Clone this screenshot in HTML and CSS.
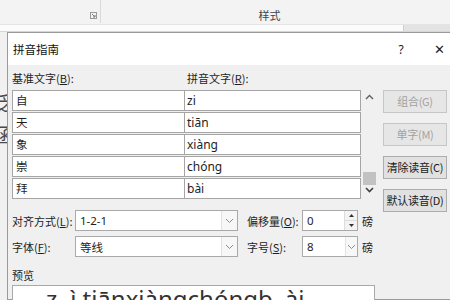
FILE: index.html
```html
<!DOCTYPE html>
<html>
<head>
<meta charset="utf-8">
<link rel="stylesheet" href="styles.css">
</head>
<body>
<div class="ribbon">
  <div class="ribbon-top">
    <div class="group-left">
      <svg class="launcher" width="7" height="7" viewBox="0 0 7 7"><rect x="0.5" y="0.5" width="6" height="6" fill="none" stroke="#9a9a9a"/><path d="M2 2 L5 5 M5 3 V5 H3" stroke="#7a7a7a" fill="none"/></svg>
    </div>
    <div class="group-right"><span class="ribbon-label">样式</span></div>
  </div>
  <div class="gallery"><div class="gallery-strip"></div><div class="gallery-side"></div></div>
</div>
<div class="workspace">
  <div class="doc-edge"><span class="g1">泛</span><span class="g2">涵</span></div>
  <div class="dialog">
    <div class="titlebar">
      <span class="title">拼音指南</span>
      <span class="cap help">?</span>
      <span class="cap close">✕</span>
    </div>
    <div class="body">
      <div class="top">
        <div class="main">
          <div class="heads">
            <span class="head1">基准文字(<u>B</u>):</span>
            <span class="head2">拼音文字(<u>R</u>):</span>
          </div>
          <div class="table-wrap">
            <div class="cells">
              <div class="cell">自</div><div class="cell py">zi</div>
              <div class="cell">天</div><div class="cell py">tiān</div>
              <div class="cell">象</div><div class="cell py">xiàng</div>
              <div class="cell">崇</div><div class="cell py">chóng</div>
              <div class="cell">拜</div><div class="cell py">bài</div>
            </div>
            <div class="scrollbar">
              <svg class="arrow" width="9" height="6" viewBox="0 0 9 6"><path d="M1 5 L4.5 1.5 L8 5" stroke="#606060" stroke-width="1.4" fill="none"/></svg>
              <div class="track"><div class="thumb"></div></div>
              <svg class="arrow" width="9" height="6" viewBox="0 0 9 6"><path d="M1 1 L4.5 4.5 L8 1" stroke="#404040" stroke-width="1.6" fill="none"/></svg>
            </div>
          </div>
        </div>
        <div class="buttons">
          <div class="btn disabled">组合(G)</div>
          <div class="btn disabled">单字(M)</div>
          <div class="btn">清除读音(C)</div>
          <div class="btn">默认读音(D)</div>
        </div>
      </div>
      <div class="opts">
        <span class="lbl">对齐方式(<u>L</u>):</span>
        <div class="combo wide"><span class="val">1-2-1</span><span class="drop"><svg width="9" height="6" viewBox="0 0 9 6"><path d="M1 1 L4.5 4.5 L8 1" stroke="#8a8a8a" fill="none"/></svg></span></div>
        <span class="lbl2">偏移量(<u>O</u>):</span>
        <div class="combo narrow"><span class="val">0</span><span class="spin"><span class="sb"><svg width="5" height="3" viewBox="0 0 5 3"><path d="M0 3 L2.5 0 L5 3Z" fill="#333"/></svg></span><span class="sb"><svg width="5" height="3" viewBox="0 0 5 3"><path d="M0 0 L2.5 3 L5 0Z" fill="#333"/></svg></span></span></div>
        <span class="unit">磅</span>

        <span class="lbl">字体(<u>F</u>):</span>
        <div class="combo wide"><span class="val">等线</span><span class="drop"><svg width="9" height="6" viewBox="0 0 9 6"><path d="M1 1 L4.5 4.5 L8 1" stroke="#8a8a8a" fill="none"/></svg></span></div>
        <span class="lbl2">字号(<u>S</u>):</span>
        <div class="combo narrow"><span class="val">8</span><span class="drop small"><svg width="9" height="6" viewBox="0 0 9 6"><path d="M1 1 L4.5 4.5 L8 1" stroke="#8a8a8a" fill="none"/></svg></span></div>
        <span class="unit">磅</span>
      </div>
      <div class="preview-label">预览</div>
      <div class="preview"><span class="pv">z</span><span class="pv">ì</span><span class="pv">tiānxiàngchóngb</span><span class="pv">ài</span></div>
    </div>
  </div>
</div>
</body>
</html>
```

FILE: styles.css
```css
* { box-sizing: border-box; }
html, body { margin: 0; padding: 0; }
body {
  width: 450px;
  height: 300px;
  overflow: hidden;
  background: #efefef;
  font-family: "Noto Sans CJK SC", "Noto Sans", sans-serif;
  font-size: 11px;
  color: #1e1e1e;
}
u { text-decoration: underline; text-underline-offset: 1px; }

.ribbon { height: 32px; background: #f3f3f3; border-bottom: 1px solid #d6d6d6; display: flex; flex-direction: column; }
.ribbon-top { height: 24px; display: flex; }
.group-left { width: 101px; flex: none; border-right: 1px solid #dadada; height: 23px; display: flex; align-items: flex-end; justify-content: flex-end; padding: 0 3px 4px 0; }
.group-right { flex: 1; display: flex; justify-content: center; padding: 8px 0 0 0; }
.ribbon-label { margin-right: 12px; color: #444; font-size: 11px; line-height: 14px; }
.gallery { flex: 1; display: flex; border-top: 1px solid #e4e4e4; }
.gallery-strip { width: 404px; flex: none; background: #fbfbfb; border-right: 1px solid #cfcfcf; }
.gallery-side { flex: 1; background: #e3e3e3; }

.workspace { display: flex; height: 268px; }
.doc-edge { width: 7px; flex: none; overflow: hidden; background: #f1f1f1; display: flex; flex-direction: column; }
.doc-edge span { font-size: 20px; line-height: 20px; color: #4a4a4a; margin-left: -8px; white-space: nowrap; }
.doc-edge .g1 { margin-top: 61px; }
.doc-edge .g2 { margin-top: 12px; }

.dialog { width: 446px; flex: none; border: 1px solid #9a9a9a; border-right: none; background: #f0f0f0; }
.titlebar { height: 32px; background: #fff; display: flex; align-items: center; padding-left: 5px; }
.title { font-size: 11.5px; color: #111; flex: 1; }
.cap { width: 20px; text-align: center; color: #222; font-family: "Noto Sans", sans-serif; }
.help { font-size: 12px; margin-right: 18px; }
.close { font-size: 13px; margin-right: 4px; }

.body { padding: 4px 0 0 4px; white-space: nowrap; }
.top { display: flex; gap: 5px; height: 141px; }
.main { width: 366px; flex: none; }
.heads { height: 21px; display: flex; line-height: 16px; padding-top: 1px; }
.head1 { width: 175px; flex: none; }
.table-wrap { display: flex; }
.cells { display: grid; grid-template-columns: 173px 176px; row-gap: 1px; width: 349px; }
.cell { height: 21px; background: #fff; border: 1px solid #a5a5a5; padding-left: 3px; line-height: 19px; font-size: 11.5px; }
.cell + .cell.py { border-left: none; }
.py { font-family: "Noto Sans", sans-serif; padding-left: 2px; font-size: 12px; }
.scrollbar { width: 17px; height: 109px; display: flex; flex-direction: column; align-items: center; padding-top: 4px; }
.scrollbar .arrow { flex: none; }
.track { flex: 1; width: 100%; display: flex; align-items: flex-end; justify-content: center; padding-bottom: 2px; }
.thumb { width: 13px; height: 13px; background: #c2c2c2; }
.scrollbar .arrow:last-child { margin-bottom: 6px; }

.buttons { display: flex; flex-direction: column; gap: 10px; padding-top: 21px; width: 64px; flex: none; }
.btn { height: 23px; flex: none; background: #e1e1e1; border: 1px solid #adadad; text-align: center; line-height: 21px; font-size: 11px; color: #1a1a1a; letter-spacing: -0.3px; }
.btn.disabled { color: #a2a2a2; background: #e6e6e6; border-color: #c6c6c6; }

.opts { display: grid; grid-template-columns: 63px 163px 64px 56px auto; row-gap: 5px; align-items: center; }
.lbl, .lbl2 { line-height: 16px; }
.lbl2 { padding-left: 9px; }
.unit { padding-left: 4px; }
.combo { height: 21px; background: #fff; border: 1px solid #a9a9a9; display: flex; align-items: center; }
.val { flex: 1; padding-left: 4px; font-family: "Noto Sans", "Noto Sans CJK SC", sans-serif; font-size: 11.5px; }
.drop { width: 16px; height: 100%; border-left: 1px solid #e2e2e2; display: flex; align-items: center; justify-content: center; background: #f7f7f7; }
.drop.small { width: 12px; }
.spin { width: 13px; height: 100%; display: flex; flex-direction: column; border-left: 1px solid #dcdcdc; }
.sb { flex: 1; display: flex; align-items: center; justify-content: center; background: #f3f3f3; border-bottom: 1px solid #dcdcdc; }
.sb:last-child { border-bottom: none; }

.preview-label { margin-top: 10px; line-height: 16px; }
.preview { margin-top: 2px; width: 363px; height: 40px; background: #fff; border: 1px solid #a9a9a9; font-family: "Noto Sans", sans-serif; font-size: 24px; line-height: 25px; color: #333; padding-left: 33px; display: flex; }
.pv:nth-child(2) { margin-left: 13px; }
.pv:nth-child(3) { margin-left: 6px; }
.pv:nth-child(4) { margin-left: 12px; }
```
